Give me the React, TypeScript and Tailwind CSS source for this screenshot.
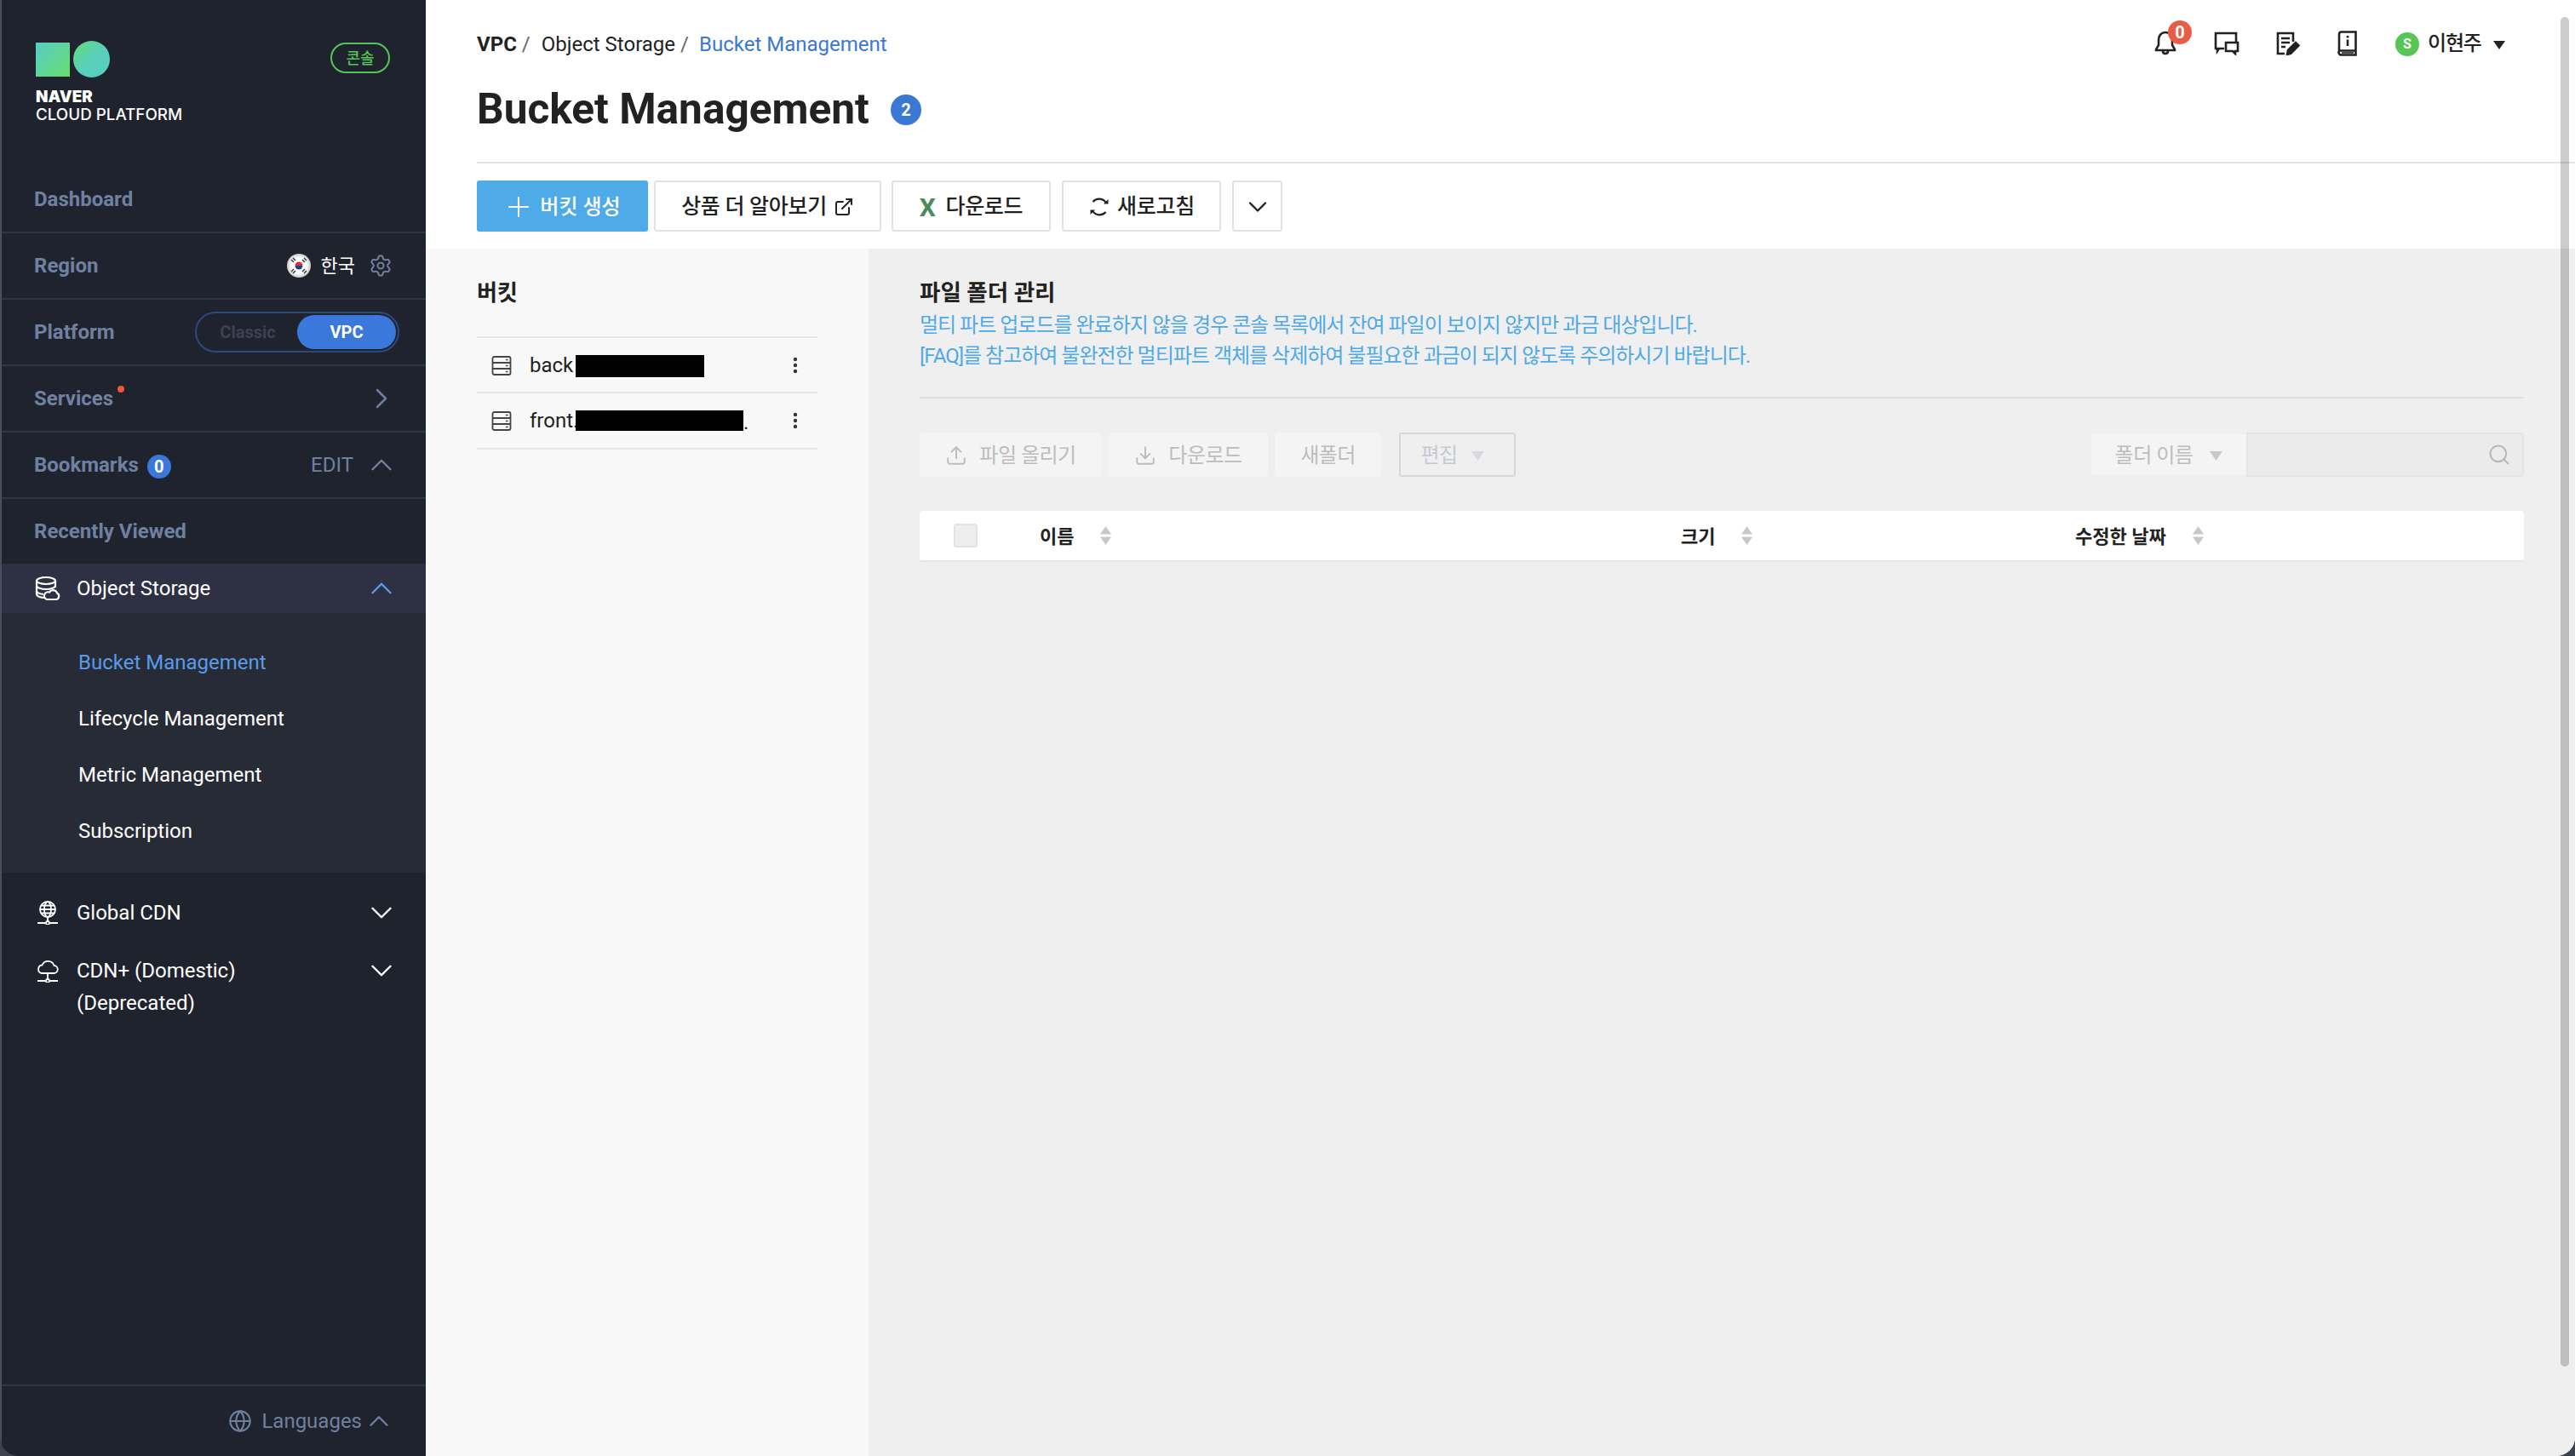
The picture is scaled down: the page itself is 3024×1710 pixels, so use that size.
import { ChevronDown, ChevronRight, ChevronUp, Settings, Plus, ExternalLink, Upload, Download, Search, MoreVertical, Globe } from "lucide-react";
import type { ReactNode } from "react";

const SideRow = ({ label, children }: { label: ReactNode; children?: ReactNode }) => (
  <div className="h-[78px] shrink-0 flex items-center justify-between pl-[38px] pr-[40px] border-b-2 border-[#2e3648]">
    <div className="text-[24px] font-bold text-[#6f80a0] flex items-center">{label}</div>
    {children}
  </div>
);

const DbCloudIcon = () => (
  <svg width="30" height="30" viewBox="0 0 30 30" fill="none" stroke="white" strokeWidth="2.2">
    <ellipse cx="13" cy="6" rx="11" ry="4" />
    <path d="M2 6v16c0 2 4 4 9 4M24 6v8M2 12c0 2 5 4 11 4s11-2 11-4M2 18c0 2 4 3.500 8 4" />
    <path d="M14 28h11a4 4 0 0 0 1-7.500 5 5 0 0 0-9-1 4.500 4.500 0 0 0-3 8.500z" fill="#2d3143" />
  </svg>
);

const GlobeNetIcon = () => (
  <svg width="26" height="28" viewBox="0 0 26 28" fill="none" stroke="white" strokeWidth="1.8">
    <circle cx="13" cy="10" r="9" />
    <ellipse cx="13" cy="10" rx="4" ry="9" />
    <path d="M4 10h18M5.500 5.500h15M5.500 14.500h15M13 19v5M1 26h9M16 26h9" />
    <circle cx="13" cy="26" r="2" />
  </svg>
);

const CloudNetIcon = () => (
  <svg width="26" height="26" viewBox="0 0 26 26" fill="none" stroke="white" strokeWidth="1.8">
    <path d="M6 15h14a4.500 4.500 0 0 0 .5-9A7.500 7.500 0 0 0 6.500 5.500 4.800 4.800 0 0 0 6 15z" />
    <path d="M13 15v6M1 24h9M16 24h9" />
    <circle cx="13" cy="24" r="2" />
  </svg>
);

const KoreaFlag = () => (
  <svg width="28" height="28" viewBox="0 0 28 28">
    <defs>
      <radialGradient id="flagShade" cx="50%" cy="50%" r="50%">
        <stop offset="65%" stopColor="#ffffff" />
        <stop offset="100%" stopColor="#c9c9c9" />
      </radialGradient>
    </defs>
    <circle cx="14" cy="14" r="14" fill="url(#flagShade)" />
    <path d="M9.500 14a4.500 4.500 0 0 1 9 0z" fill="#d8342f" />
    <path d="M9.500 14a4.500 4.500 0 0 0 9 0z" fill="#1f3f94" />
    <path d="M5 7l3 3M7 5l3 3M20 5l3 3M18 7l3 3M5 21l3-3M7 23l3-3M20 23l3-3M18 21l3-3" stroke="#333" strokeWidth="1.400" />
  </svg>
);

const SortArrows = () => (
  <svg width="15" height="22" viewBox="0 0 15 22" fill="#c8c8c8">
    <path d="M7.500 0l6.500 9.500H1z" />
    <path d="M7.500 22L1 12.500h13z" />
  </svg>
);

const ServerIcon = () => (
  <svg width="24" height="24" viewBox="0 0 24 24" fill="none" stroke="#444" strokeWidth="1.800">
    <rect x="1.500" y="2" width="21" height="21" rx="2" />
    <path d="M1.500 9h21M1.500 16h21" />
    <path d="M17 5.500h2.500M17 12.500h2.500M17 19.500h2.500" strokeWidth="1.600" />
  </svg>
);

const BucketRow = ({ name, mask, tail }: { name: string; mask: string; tail?: string }) => (
  <div className="h-[66px] first:h-[65px] flex items-center pl-[17px] pr-[14px] border-b-2 border-[#e6e6e6] relative">
    <ServerIcon />
    <span className="ml-[21px] text-[24px] text-[#222] w-[120px]">{name}</span>
    <div className={`absolute left-[116px] top-[20px] bg-black ${mask}`} />
    {tail && <span className="absolute left-[313px] top-[16px] text-[24px] text-[#222]">{tail}</span>}
    <MoreVertical className="ml-auto text-[#333]" size={24} strokeWidth={2.4} />
  </div>
);

const TopButton = ({ className, children }: { className: string; children: ReactNode }) => (
  <button className={`h-[60px] pt-[2px] flex items-center justify-center gap-[8px] rounded-[3px] border-2 border-[#e2e2e2] bg-white text-[25px] tracking-[-0.3px] font-medium text-[#222] ${className}`}>
    {children}
  </button>
);

const GhostButton = ({ className, children }: { className: string; children: ReactNode }) => (
  <button className={`h-[52px] pt-[2px] flex items-center justify-center gap-[14px] rounded-[4px] bg-[#f4f4f4] text-[24px] tracking-[-0.5px] text-[#bdbdbd] ${className}`}>
    {children}
  </button>
);

const ColHead = ({ className, label }: { className: string; label: string }) => (
  <div className={`flex items-center text-[22px] font-bold text-[#222] ${className}`}>
    <span className="pt-[2px]">{label}</span>
    <span className="ml-[30px] flex"><SortArrows /></span>
  </div>
);

const App = () => {
  return (
    <div className="w-[3024px] h-[1710px] bg-[#3c434c] overflow-hidden">
      <div className="w-full h-full flex rounded-b-[22px] overflow-hidden font-['Roboto','Noto_Sans_CJK_KR',sans-serif]">
        {/* sidebar */}
        <aside className="w-[500px] shrink-0 bg-[#1f232e] border-l-2 border-[#4b4f5c] flex flex-col">
          <div className="h-[196px] shrink-0 pt-[48px] pl-[40px] pr-[42px] flex justify-between items-start">
            <div>
              <div className="flex items-center gap-[4px]">
                <div className="w-[40px] h-[40px] bg-gradient-to-br from-[#57cdc4] to-[#6bdc68]" />
                <div className="w-[43px] h-[43px] rounded-full bg-gradient-to-br from-[#66da72] via-[#59cfba] to-[#57cdc4]" />
              </div>
              <div className="mt-[12px] text-[18.8px] leading-[21px] text-white font-['Inter',sans-serif]">
                <div className="font-black">NAVER</div>
                <div className="font-medium">CLOUD PLATFORM</div>
              </div>
            </div>
            <div className="mt-[2px] w-[70px] h-[36px] rounded-full border-2 border-[#55c45a] text-[#55c45a] text-[18px] font-medium flex items-center justify-center">콘솔</div>
          </div>
          <SideRow label="Dashboard" />
          <SideRow label="Region">
            <div className="flex items-center">
              <KoreaFlag />
              <span className="ml-[12px] text-[22px] text-white">한국</span>
              <Settings className="ml-[16px] -mr-[1px] text-[#6f80a0]" size={28} strokeWidth={1.700} />
            </div>
          </SideRow>
          <SideRow label="Platform">
            <div className="-mr-[9px] w-[240px] h-[48px] rounded-full border-2 border-[#2c4a7c] flex items-center pr-[2px]">
              <span className="w-[118px] pl-[2px] text-center text-[20px] font-bold text-[#3b4254]">Classic</span>
              <span className="w-[116px] h-[40px] rounded-full bg-[#3a78dc] text-white text-[20px] font-bold flex items-center justify-center">VPC</span>
            </div>
          </SideRow>
          <SideRow label={<>Services<span className="self-start mt-[3px] ml-[5px] w-[8px] h-[8px] rounded-full bg-[#e8593f]" /></>}>
            <ChevronRight className="-mr-[8px] text-[#6f80a0]" size={40} strokeWidth={1.500} />
          </SideRow>
          <SideRow label={<>Bookmarks<span className="ml-[10px] mt-[4px] w-[28px] h-[28px] rounded-full bg-[#3a78dc] text-white text-[20px] font-bold flex items-center justify-center">0</span></>}>
            <div className="flex items-center text-[#6f80a0]">
              <span className="text-[24px]">EDIT</span>
              <ChevronUp className="ml-[12px] -mr-[9px]" size={42} strokeWidth={1.400} />
            </div>
          </SideRow>
          <div className="h-[76px] shrink-0 flex items-center pl-[38px] text-[24px] font-bold text-[#6f80a0]">Recently Viewed</div>
          <div className="h-[58px] shrink-0 bg-[#2d3143] flex items-center pl-[39px] pr-[40px] text-[24px] text-white">
            <DbCloudIcon />
            <span className="ml-[19px]">Object Storage</span>
            <ChevronUp className="ml-auto -mr-[9px] text-[#5a9be8]" size={42} strokeWidth={1.400} />
          </div>
          <div className="h-[305px] shrink-0 bg-[#272b36] pt-[25px] pl-[90px] text-[24px] text-white flex flex-col">
            <div className="h-[66px] flex items-center text-[#5a9be8]">Bucket Management</div>
            <div className="h-[66px] flex items-center">Lifecycle Management</div>
            <div className="h-[66px] flex items-center">Metric Management</div>
            <div className="h-[66px] flex items-center">Subscription</div>
          </div>
          <div className="mt-[26px] h-[42px] shrink-0 flex items-center pl-[41px] pr-[40px] text-[24px] text-white">
            <GlobeNetIcon />
            <span className="ml-[21px]">Global CDN</span>
            <ChevronDown className="ml-auto -mr-[9px]" size={42} strokeWidth={1.400} />
          </div>
          <div className="mt-[28px] flex items-start pl-[41px] pr-[40px] text-[24px] leading-[38px] text-white">
            <span className="mt-[7px] flex"><CloudNetIcon /></span>
            <span className="ml-[21px]">CDN+ (Domestic)<br />(Deprecated)</span>
            <ChevronDown className="ml-auto -mr-[9px] -mt-[2px]" size={42} strokeWidth={1.400} />
          </div>
          <div className="mt-auto h-[84px] shrink-0 border-t-2 border-[#2e3648] flex items-center justify-end pr-[36px] text-[24px] text-[#6f80a0]">
            <Globe size={28} strokeWidth={1.800} />
            <span className="ml-[11px]">Languages</span>
            <ChevronUp className="ml-[1px]" size={38} strokeWidth={1.500} />
          </div>
        </aside>

        {/* main */}
        <main className="flex-1 min-w-0 bg-white flex flex-col relative">
          <header className="h-[192px] shrink-0 ml-[60px] border-b-2 border-[#e4e4e4] pt-[36px] flex flex-col">
            <div className="h-[32px] flex items-center text-[24px] text-[#222]">
              <span className="font-bold">VPC</span>
              <span className="ml-[6px] text-[#666]">/</span>
              <span className="ml-[13px]">Object Storage</span>
              <span className="ml-[6px] text-[#666]">/</span>
              <span className="ml-[12px] text-[#3a78d4]">Bucket Management</span>
            </div>
            <div className="mt-[27px] flex items-center">
              <h1 className="text-[49.6px] leading-[66px] font-bold text-[#222]">Bucket Management</h1>
              <span className="ml-[25px] mt-[1px] w-[36px] h-[36px] rounded-full bg-[#3a78d4] text-white text-[20px] font-bold flex items-center justify-center">2</span>
            </div>
          </header>
          <div className="h-[100px] shrink-0 pl-[60px] pt-[20px] flex items-start">
            <button className="w-[201px] h-[60px] pt-[2px] rounded-[3px] bg-[#4faae8] text-white text-[24px] font-medium flex items-center justify-center gap-[6px]">
              <Plus className="-ml-[2px]" size={38} strokeWidth={1.300} />버킷 생성
            </button>
            <TopButton className="ml-[7px] w-[267px]">상품 더 알아보기<ExternalLink size={24} strokeWidth={2} /></TopButton>
            <TopButton className="ml-[12px] w-[187px] gap-[12px]"><span className="text-[#4c8a5e] text-[30px] font-bold">X</span>다운로드</TopButton>
            <TopButton className="ml-[13px] w-[187px]">
              <svg width="26" height="26" viewBox="0 0 26 26" fill="none" stroke="#222" strokeWidth="2.200">
                <path d="M21 8.500A9.500 9.500 0 0 0 5.500 7M5 17.500A9.500 9.500 0 0 0 20.500 19" />
                <path d="M18 9.500h5.500V4zM8 16.500H2.500V22z" fill="#222" stroke="none" />
              </svg>
              새로고침
            </TopButton>
            <TopButton className="ml-[13px] w-[59px]"><ChevronDown size={36} strokeWidth={1.600} /></TopButton>
          </div>
          <div className="flex-1 min-h-0 flex">
            <section className="w-[520px] shrink-0 bg-[#f8f8f8] pl-[60px] pr-[60px] pt-[34px]">
              <h2 className="h-[36px] flex items-center text-[26px] font-bold text-[#222]">버킷</h2>
              <div className="mt-[33px] border-t-2 border-[#e6e6e6]">
                <BucketRow name="back" mask="w-[151px] h-[26px]" />
                <BucketRow name="front." mask="w-[197px] h-[24px]" tail="." />
              </div>
            </section>
            <section className="flex-1 min-w-0 bg-[#efefef] pl-[60px] pr-[60px] pt-[34px]">
              <h2 className="h-[36px] flex items-center text-[26.5px] font-bold text-[#222]">파일 폴더 관리</h2>
              <p className="mt-[2px] text-[24px] tracking-[-1px] leading-[36px] text-[#4faae8]">
                멀티 파트 업로드를 완료하지 않을 경우 콘솔 목록에서 잔여 파일이 보이지 않지만 과금 대상입니다.<br />
                [FAQ]를 참고하여 불완전한 멀티파트 객체를 삭제하여 불필요한 과금이 되지 않도록 주의하시기 바랍니다.
              </p>
              <div className="mt-[30px] border-t-2 border-[#dedede]" />
              <div className="mt-[40px] h-[52px] flex items-center">
                <GhostButton className="w-[214px]"><Upload size={26} strokeWidth={1.800} />파일 올리기</GhostButton>
                <GhostButton className="ml-[8px] w-[187px]"><Download size={26} strokeWidth={1.800} />다운로드</GhostButton>
                <GhostButton className="ml-[8px] w-[125px]">새폴더</GhostButton>
                <div className="ml-[21px] w-[137px] h-[52px] pt-[2px] pr-[12px] rounded-[3px] border-2 border-[#d3d8de] flex items-center justify-center gap-[16px] text-[24px] tracking-[-0.5px] text-[#c4cad2]">
                  편집
                  <svg width="15" height="11" viewBox="0 0 15 11" fill="#d6d9dd"><path d="M0 0h15L7.500 11z" /></svg>
                </div>
                <div className="ml-auto h-[52px] flex items-center">
                  <div className="w-[182px] h-[48px] pt-[2px] rounded-l-[4px] bg-[#f4f4f4] flex items-center justify-center gap-[20px] text-[24px] tracking-[-0.5px] text-[#bdbdbd]">
                    폴더 이름
                    <svg width="15" height="11" viewBox="0 0 15 11" fill="#c8c8c8"><path d="M0 0h15L7.500 11z" /></svg>
                  </div>
                  <div className="w-[326px] h-[52px] rounded-r-[4px] bg-[#ebebeb] border-2 border-[#e4e4e4] flex items-center justify-end pr-[13px]">
                    <Search className="text-[#b8b8b8]" size={28} strokeWidth={1.800} />
                  </div>
                </div>
              </div>
              <div className="mt-[40px] h-[60px] rounded-[4px] bg-white border-b-2 border-[#e6e6e6] flex items-center">
                <div className="ml-[40px] w-[28px] h-[28px] rounded-[3px] bg-[#eeeeee] border-2 border-[#e2e2e2]" />
                <ColHead className="ml-[73px] w-[753px]" label="이름" />
                <ColHead className="w-[463px]" label="크기" />
                <ColHead className="" label="수정한 날짜" />
              </div>
            </section>
          </div>
          <div className="absolute right-[7px] top-[20px] w-[10px] h-[1585px] rounded-full bg-black/20" />
          {/* header actions */}
          <div className="absolute top-[24px] left-[2017px] flex items-center h-[54px] text-[#222]">
            <div className="relative w-[52px] h-[54px] flex items-center">
              <svg className="ml-[13px]" width="26" height="30" viewBox="0 0 26 30" fill="none" stroke="#222" strokeWidth="2.600">
                <path d="M13 2c-5 0-8 4-8 9v6l-3 5v1h22v-1l-3-5v-6c0-5-3-9-8-9zM10 24c0 4 6 4 6 0" />
              </svg>
              <span className="absolute left-[29px] top-0 w-[28px] h-[28px] rounded-full bg-[#e85d47] text-white text-[20px] font-bold flex items-center justify-center">0</span>
            </div>
            <svg className="ml-[31px]" width="30" height="28" viewBox="0 0 30 28" fill="none" stroke="#222" strokeWidth="2.600">
              <path d="M12 20H6l-2 3v-3H2V2h24v10" />
              <path d="M14 13h14v10h-3v3l-3-3h-8z" />
            </svg>
            <svg className="ml-[43px]" width="28" height="28" viewBox="0 0 28 28" fill="none" stroke="#222" strokeWidth="2.600">
              <path d="M10 26H2V2h18v10" />
              <path d="M6 8h10M6 13h10M6 18h5" />
              <path d="M13 27l1-5 9-9 3.500 3.500-9 9z" fill="#222" />
            </svg>
            <svg className="ml-[44px]" width="24" height="30" viewBox="0 0 24 30" fill="none" stroke="#222" strokeWidth="2.600">
              <path d="M2 24V4a2.500 2.500 0 0 1 2.500-2.500h17V28.500H5a3 3 0 0 1-3-4.500zM2 23.500h19.500" />
              <path d="M5 26h14" strokeWidth="1.600" />
              <path d="M12 6v2.500M12 10.500v7.500" />
            </svg>
            <span className="ml-[44px] mt-[2px] w-[28px] h-[28px] rounded-full bg-[#58c654] text-white text-[16px] font-bold flex items-center justify-center">S</span>
            <span className="ml-[10px] text-[24px] tracking-[-1.2px] font-medium">이현주</span>
            <svg className="ml-[14px] mt-[4px]" width="14" height="10" viewBox="0 0 14 10" fill="#222"><path d="M0 0h14L7 10z" /></svg>
          </div>
        </main>
      </div>
    </div>
  );
};

export default App;
